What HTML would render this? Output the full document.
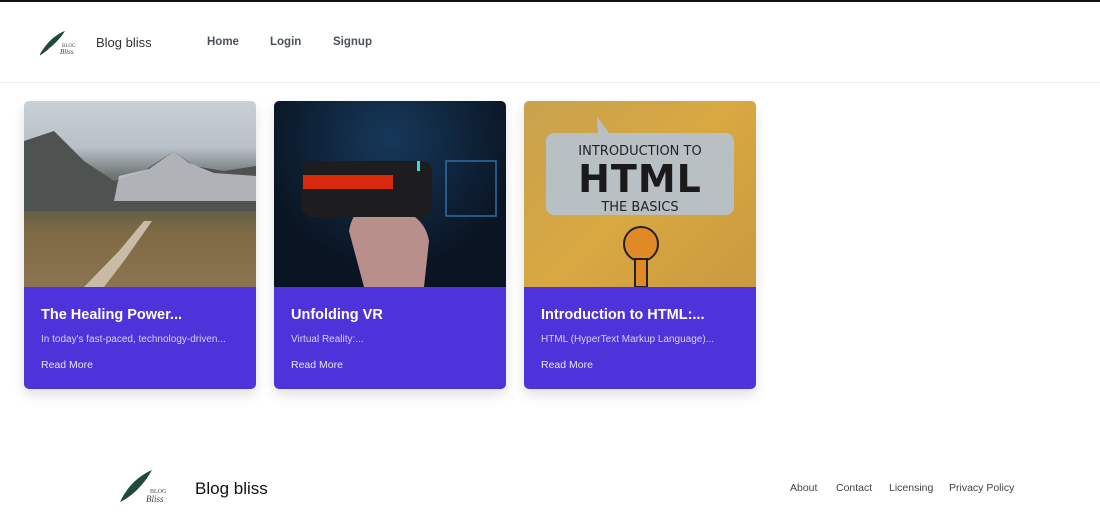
<!DOCTYPE html>
<html><head><meta charset="utf-8"><style>
*{margin:0;padding:0;box-sizing:border-box}
body{width:1100px;height:521px;overflow:hidden;background:#fff;font-family:"Liberation Sans",sans-serif;position:relative}
.top{position:absolute;top:0;left:0;width:1100px;height:2px;background:#111}
.hdr{position:absolute;top:2px;left:0;width:1100px;height:81px;border-bottom:1px solid #eef0f5}
.a{position:absolute;font-size:13px}
.card{position:absolute;top:101px;width:232px;height:288px;border-radius:5px;overflow:hidden;box-shadow:0 6px 12px rgba(0,0,0,.12)}
.img{height:186px;position:relative;overflow:hidden}
.body{height:102px;background:#4d33d9;color:#fff;padding:20px 17px}
.body h3{font-size:14.5px;font-weight:bold;margin-bottom:11px}
.body p{font-size:10px;color:#d7d0ff;margin-bottom:10px}
.body span{font-size:10.5px;color:#e8e4ff}
.foot a{color:#444;text-decoration:none}
</style></head><body>
<div class="top"></div>
<div class="hdr">
<svg style="position:absolute;left:38px;top:27px" width="42" height="28" viewBox="0 0 42 28"><path d="M2 25 C8 15 16 6 27 2 C22 10 14 18 5 24Z" fill="#1f4a3a"/><path d="M2 26 L10 20" stroke="#333" stroke-width="1"/><text x="24" y="18" font-size="5" fill="#444" font-family="Liberation Serif">BLOG</text><text x="22" y="25" font-size="7" fill="#444" font-style="italic" font-family="Liberation Serif">Bliss</text></svg>
<div class="a" style="left:96px;top:33px;color:#333">Blog bliss</div>
<div class="a" style="left:207px;top:34px;color:#4b5060;font-weight:bold;font-size:11.5px">Home</div>
<div class="a" style="left:270px;top:34px;color:#4b5060;font-weight:bold;font-size:11.5px">Login</div>
<div class="a" style="left:333px;top:34px;color:#4b5060;font-weight:bold;font-size:11.5px">Signup</div>
</div>

<div class="card" style="left:24px">
<div class="img" style="background:linear-gradient(#c9d0d6 0%,#b8c1c8 25%,#6f7674 40%,#5b5a48 55%,#7d6a45 70%,#8b7550 100%)">
<svg width="232" height="186" style="position:absolute;left:0;top:0"><path d="M0 40 L30 30 L60 60 L90 80 L120 70 L150 50 L170 65 L200 70 L232 65 L232 110 L0 110Z" fill="#4e5250"/><path d="M95 75 L125 68 L150 50 L165 62 L190 72 L232 75 L232 100 L90 100Z" fill="#d8dde2" opacity=".7"/><path d="M120 120 L128 120 L100 160 L80 186 L60 186 L95 150Z" fill="#c9bba5"/></svg>
</div>
<div class="body"><h3>The Healing Power...</h3><p>In today's fast-paced, technology-driven...</p><span>Read More</span></div></div>

<div class="card" style="left:274px">
<div class="img" style="background:radial-gradient(circle at 50% 20%,#16385a,#0a1422 70%)">
<svg width="232" height="186" style="position:absolute;left:0;top:0"><path d="M75 130 Q80 100 110 105 Q150 110 155 140 L150 186 L90 186Z" fill="#b88f8a"/><rect x="28" y="60" width="130" height="56" rx="10" fill="#1d1d20"/><rect x="29" y="74" width="90" height="14" fill="#d8290f"/><rect x="143" y="60" width="3" height="10" fill="#3dd"/><rect x="172" y="60" width="50" height="55" fill="none" stroke="#2a6fa8" stroke-width="1.5"/></svg>
</div>
<div class="body"><h3>Unfolding VR</h3><p>Virtual Reality:...</p><span>Read More</span></div></div>

<div class="card" style="left:524px">
<div class="img" style="background:linear-gradient(135deg,#c8a24e,#d9a841,#c99a40)">
<svg width="232" height="186" style="position:absolute;left:0;top:0"><rect x="22" y="32" width="188" height="82" rx="8" fill="#b8c0c4"/><path d="M74 32 L73 16 L85 32Z" fill="#b8c0c4"/><text x="116" y="54" text-anchor="middle" font-size="13" fill="#222" font-family="DejaVu Sans">INTRODUCTION TO</text><text x="116" y="91" text-anchor="middle" font-size="38" fill="#1a1a1a" font-family="DejaVu Sans" font-weight="bold" letter-spacing="1">HTML</text><text x="116" y="110" text-anchor="middle" font-size="13" fill="#222" font-family="DejaVu Sans">THE  BASICS</text><circle cx="117" cy="143" r="17" fill="#e08a27" stroke="#222" stroke-width="2"/><rect x="111" y="158" width="12" height="28" fill="#e08a27" stroke="#222" stroke-width="2"/></svg>
</div>
<div class="body"><h3>Introduction to HTML:...</h3><p>HTML (HyperText Markup Language)...</p><span>Read More</span></div></div>

<div class="foot">
<svg style="position:absolute;left:118px;top:469px" width="56" height="36" viewBox="0 0 56 36"><path d="M2 33 C8 20 18 8 34 1 C28 12 18 24 6 31Z" fill="#1f4a3a"/><text x="32" y="24" font-size="6" fill="#444" font-family="Liberation Serif">BLOG</text><text x="28" y="33" font-size="9" fill="#444" font-style="italic" font-family="Liberation Serif">Bliss</text></svg>
<div class="a" style="left:195px;top:479px;font-size:17px;color:#111">Blog bliss</div>
<div class="a" style="left:790px;top:482px;font-size:10.5px"><a>About</a></div>
<div class="a" style="left:836px;top:482px;font-size:10.5px"><a>Contact</a></div>
<div class="a" style="left:889px;top:482px;font-size:10.5px"><a>Licensing</a></div>
<div class="a" style="left:949px;top:482px;font-size:10.5px"><a>Privacy Policy</a></div>
</div>
</body></html>
